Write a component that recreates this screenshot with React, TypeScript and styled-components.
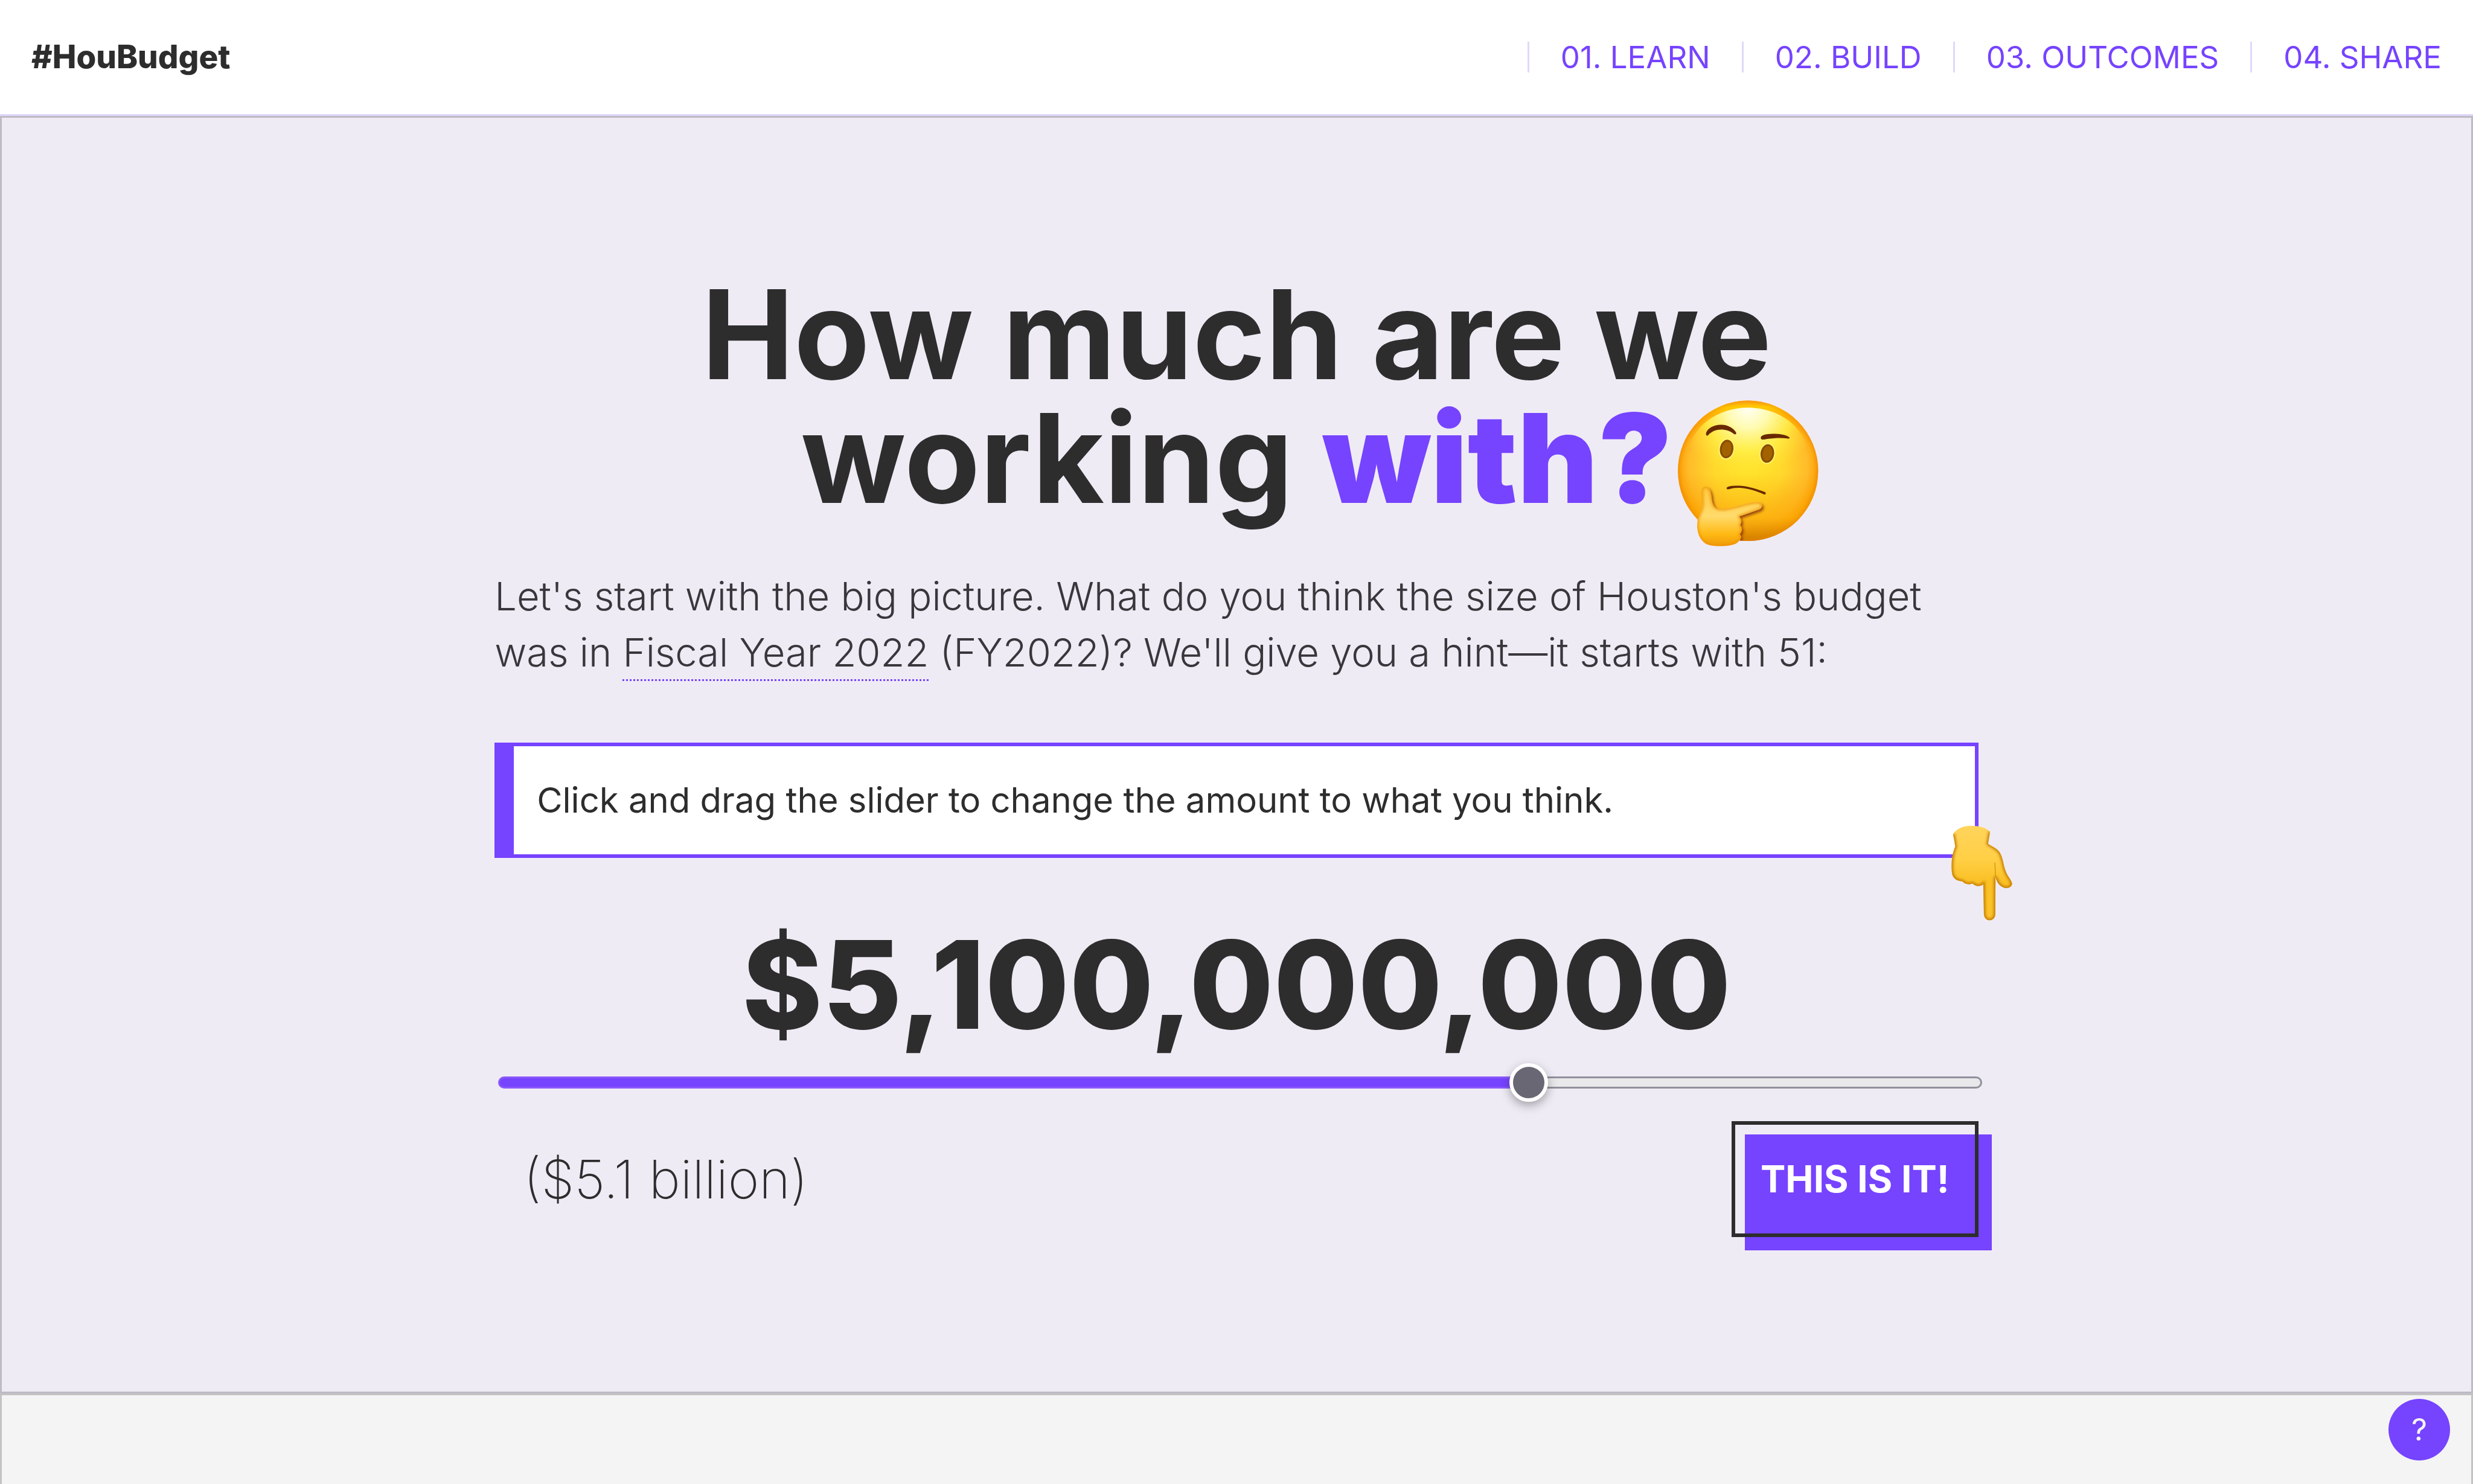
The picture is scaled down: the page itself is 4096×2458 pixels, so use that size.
import React, { useState } from "react";
import styled, { createGlobalStyle } from "styled-components";

const color = {
  purple: "#7643ff",
  ink: "#2d2d2d",
  hero: "#efebf5",
  lavender: "#e0d8f9",
};

const GlobalStyle = createGlobalStyle`
  *, *::before, *::after { box-sizing: border-box; }
  body {
    margin: 0;
    background: #f4f4f4;
    color: ${color.ink};
    font-family: Inter, "Liberation Sans", sans-serif;
  }
  h1, p { margin: 0; }
`;

const Page = styled.div`
  min-height: 100vh;
  display: flex;
  flex-direction: column;
`;

const Header = styled.header`
  display: flex;
  justify-content: space-between;
  align-items: center;
  padding: 69px 0 69px 52px;
  background: #fff;
  border-bottom: 3px solid ${color.lavender};
  font-size: 51px;
  line-height: 51px;
`;

const Brand = styled.a`
  color: ${color.ink};
  font-size: 53px;
  font-weight: 800;
  text-decoration: none;
`;

const Nav = styled.nav`
  display: flex;
`;

const NavLink = styled.a`
  padding: 0 52px;
  border-left: 3px solid ${color.lavender};
  color: ${color.purple};
  text-decoration: none;
`;

const Hero = styled.main`
  padding: 256px 0;
  background: ${color.hero};
  border: 3px solid #bebac6;
`;

const Content = styled.div`
  width: 60vw;
  margin: 0 auto;
  display: flex;
  flex-direction: column;
`;

const Title = styled.h1`
  font-size: 205px;
  line-height: 205px;
  font-weight: 700;
  text-align: center;
`;

const Accent = styled.span`
  position: relative;
  display: inline-block;
  color: ${color.purple};
  font-weight: 900;
`;

const ThinkingEmoji = styled.svg`
  position: absolute;
  left: calc(100% + 8px);
  top: 7px;
  width: 234px;
  height: 242px;
`;

const Intro = styled.p`
  margin-top: 80px;
  color: #39373b;
  font-size: 65px;
  line-height: 93px;
  font-weight: 300;
`;

const Term = styled.abbr`
  padding-bottom: 5px;
  border-bottom: 3px dotted ${color.purple};
  text-decoration: none;
`;

const Callout = styled.p`
  position: relative;
  margin-top: 103px;
  padding: 58px 38px;
  background: #fff;
  border: 6px solid ${color.purple};
  border-left-width: 32px;
  font-size: 58px;
  line-height: 63px;
  font-weight: 400;
`;

const PointerEmoji = styled.svg`
  position: absolute;
  right: -64px;
  bottom: -112px;
  width: 104px;
  height: 160px;
`;

const Amount = styled.output`
  display: block;
  margin-top: 107px;
  font-size: 202px;
  line-height: 205px;
  font-weight: 800;
  text-align: center;
`;

const Slider = styled.input<{ $fill: number }>`
  appearance: none;
  width: 100%;
  height: 64px;
  margin: 28px 0 0;
  transform: translateX(6px);
  background: none;
  cursor: pointer;

  &::-webkit-slider-runnable-track {
    height: 20px;
    border: 3px solid transparent;
    border-radius: 10px;
    background:
      linear-gradient(to right, ${color.purple} ${(p) => p.$fill}%, #e8e8ea ${(p) => p.$fill}%) padding-box,
      linear-gradient(to right, #8958fa ${(p) => p.$fill}%, #918f9c ${(p) => p.$fill}%) border-box;
  }

  &::-webkit-slider-thumb {
    appearance: none;
    width: 64px;
    height: 64px;
    margin-top: -25px;
    border: 6px solid #fff;
    border-radius: 50%;
    background: #686773;
    box-shadow: 0 6px 16px rgba(45, 45, 45, 0.4);
  }
`;

const Actions = styled.div`
  display: flex;
  justify-content: space-between;
  align-items: center;
  margin-top: 32px;
`;

const Approximation = styled.p`
  padding-left: 48px;
  font-size: 88px;
  font-weight: 200;
`;

const SubmitButton = styled.button`
  position: relative;
  z-index: 0;
  padding: 64px 48px;
  border: 0;
  background: none;
  color: #fff;
  font: 700 62px/64px Inter, "Liberation Sans", sans-serif;
  cursor: pointer;

  &::before {
    content: "";
    position: absolute;
    z-index: -1;
    inset: 22px -22px -22px 22px;
    background: ${color.purple};
  }

  &::after {
    content: "";
    position: absolute;
    inset: 0;
    border: 6px solid ${color.ink};
  }
`;

const NextSection = styled.section`
  flex: 1;
  border: 3px solid #c3c3c3;
  border-bottom: 0;
  background: #f4f4f4;
`;

const HelpButton = styled.button`
  position: fixed;
  right: 38px;
  bottom: 39px;
  width: 102px;
  height: 102px;
  padding: 0;
  border: 0;
  border-radius: 50%;
  background: ${color.purple};
  color: #f4f4f4;
  font: 400 51px/102px Inter, "Liberation Sans", sans-serif;
  cursor: pointer;
`;

const THINK_HAND =
  "M374 712 C370 672 415 672 428 712 C437 742 434 770 444 792 C455 820 475 824 510 822 C580 815 650 782 712 778 C752 776 762 812 728 826 L606 868 C622 884 624 904 612 922 C628 940 626 962 610 978 C624 994 618 1010 604 1020 C590 1046 530 1052 490 1052 C440 1052 402 1048 380 1022 C340 980 340 910 352 876 C362 848 378 822 378 790 Z";

function Thinking() {
  return (
    <ThinkingEmoji viewBox="222 146 876 908" aria-hidden="true">
      <defs>
        <radialGradient id="face" cx="661" cy="560" r="462" gradientUnits="userSpaceOnUse">
          <stop offset="0" stopColor="#ffe52a" />
          <stop offset=".45" stopColor="#ffd92c" />
          <stop offset=".8" stopColor="#ffbc2a" />
          <stop offset=".9" stopColor="#fda810" />
          <stop offset="1" stopColor="#ee8a02" />
        </radialGradient>
        <linearGradient id="rim" x1="0" y1="148" x2="0" y2="400" gradientUnits="userSpaceOnUse">
          <stop offset="0" stopColor="#ffa41c" />
          <stop offset=".16" stopColor="#ffcb00" />
          <stop offset=".4" stopColor="#ffb000" stopOpacity=".7" />
          <stop offset="1" stopColor="#ff9a00" stopOpacity="0" />
        </linearGradient>
        <linearGradient id="base" x1="0" y1="600" x2="0" y2="1020" gradientUnits="userSpaceOnUse">
          <stop offset="0" stopColor="#f9a000" stopOpacity="0" />
          <stop offset=".65" stopColor="#fba900" stopOpacity=".6" />
          <stop offset="1" stopColor="#cf7c00" />
        </linearGradient>
        <radialGradient id="shine" cx="661" cy="190" r="440" gradientUnits="userSpaceOnUse">
          <stop offset="0" stopColor="#fffff6" />
          <stop offset=".3" stopColor="#fffbb0" />
          <stop offset=".62" stopColor="#fff04a" stopOpacity=".85" />
          <stop offset="1" stopColor="#ffdf30" stopOpacity="0" />
        </radialGradient>
        <linearGradient id="palm" x1="0" y1="680" x2="0" y2="1052" gradientUnits="userSpaceOnUse">
          <stop offset="0" stopColor="#ffc93c" />
          <stop offset=".5" stopColor="#ffdb6c" />
          <stop offset=".8" stopColor="#ffb914" />
          <stop offset="1" stopColor="#ef9a08" />
        </linearGradient>
        <filter id="soft" x="-20%" y="-20%" width="140%" height="140%">
          <feGaussianBlur stdDeviation="7" />
        </filter>
        <clipPath id="disc">
          <circle cx="661" cy="584" r="436" />
        </clipPath>
        <clipPath id="handShape">
          <path d={THINK_HAND} />
        </clipPath>
      </defs>
      <circle cx="661" cy="584" r="436" fill="url(#face)" />
      <circle cx="661" cy="584" r="436" fill="url(#base)" />
      <circle cx="661" cy="584" r="436" fill="url(#rim)" />
      <path d="M275 520 C290 320 460 192 661 192 C862 192 1032 320 1047 520 C1040 640 900 660 661 660 C420 660 282 640 275 520 Z" fill="url(#shine)" />
      <g clipPath="url(#disc)">
        <circle cx="661" cy="584" r="432" fill="none" stroke="#f08a08" strokeWidth="14" opacity=".6" filter="url(#soft)" />
        <path d={THINK_HAND} fill="#843310" opacity=".85" transform="translate(10 12)" filter="url(#soft)" />
      </g>
      <g stroke="#fff36a" strokeWidth="8" fill="#8a4c00">
        <ellipse cx="528" cy="449" rx="46" ry="62" transform="rotate(8 528 449)" />
        <ellipse cx="781" cy="477" rx="46" ry="62" transform="rotate(8 781 477)" />
      </g>
      <g fill="#a36200">
        <ellipse cx="528" cy="449" rx="30" ry="46" transform="rotate(8 528 449)" />
        <ellipse cx="781" cy="477" rx="30" ry="46" transform="rotate(8 781 477)" />
      </g>
      <g fill="#692900">
        <path d="M400 350 C410 318 450 298 492 298 C540 298 575 322 588 350 C588 358 580 360 573 355 C550 336 524 328 492 328 C456 330 434 340 412 364 C404 370 398 362 400 350 Z" />
        <path d="M741 374 C746 358 790 354 830 354 C870 355 905 364 919 377 C921 384 914 385 906 383 C880 380 850 380 820 382 C790 384 770 388 752 390 C742 390 738 382 741 374 Z" />
        <path d="M528 690 C536 676 580 676 610 677 C665 680 715 698 768 717 C776 725 768 734 758 730 C712 708 660 693 610 690 C580 688 556 694 538 699 C530 700 527 696 528 690 Z" />
      </g>
      <path d={THINK_HAND} fill="url(#palm)" />
      <g clipPath="url(#handShape)">
        <path d={THINK_HAND} fill="none" stroke="#f09208" strokeWidth="14" filter="url(#soft)" />
      </g>
    </ThinkingEmoji>
  );
}

const DOWN_HAND =
  "M190 142 C216 106 256 91 306 91 C356 92 398 104 420 128 C417 154 412 178 408 202 C440 224 470 234 484 262 C502 296 504 340 518 374 C530 408 552 424 558 452 C552 474 530 482 508 476 C478 468 462 440 454 408 L453 640 C450 690 386 692 382 640 L378 454 C364 468 334 472 312 450 C292 458 264 456 248 436 C222 434 196 424 186 396 C176 352 180 270 204 220 C200 194 196 168 190 142 Z";

function PointingDown() {
  return (
    <PointerEmoji viewBox="176 88 390 600" aria-hidden="true">
      <defs>
        <linearGradient id="wrist" x1="0" y1="90" x2="0" y2="680" gradientUnits="userSpaceOnUse">
          <stop offset="0" stopColor="#ffd45c" />
          <stop offset=".35" stopColor="#ffcf45" />
          <stop offset=".6" stopColor="#fac024" />
          <stop offset="1" stopColor="#fcc42c" />
        </linearGradient>
        <filter id="edge" x="-20%" y="-20%" width="140%" height="140%">
          <feGaussianBlur stdDeviation="8" />
        </filter>
        <clipPath id="downShape">
          <path d={DOWN_HAND} />
        </clipPath>
      </defs>
      <path d={DOWN_HAND} fill="url(#wrist)" />
      <g clipPath="url(#downShape)" fill="none" stroke="#c47a04">
        <path
          d="M190 142 C196 168 200 194 204 220 C180 270 176 352 186 396 C196 424 222 434 248 436 C264 456 292 458 312 450 C334 472 364 468 378 454 L382 640 C386 692 450 690 453 640 L454 408 C462 440 478 468 508 476 C530 482 552 474 558 452 C552 424 530 408 518 374 C504 340 502 296 484 262 C470 234 440 224 408 202 C412 178 417 154 420 128"
          strokeWidth="20"
          filter="url(#edge)"
        />
        <path d="M454 410 L450 320" strokeWidth="5" opacity=".7" />
      </g>
    </PointerEmoji>
  );
}

const MIN = 3000;
const MAX = 6000;

const steps = [
  { id: "learn", label: "01. LEARN" },
  { id: "build", label: "02. BUILD" },
  { id: "outcomes", label: "03. OUTCOMES" },
  { id: "share", label: "04. SHARE" },
];

export default function App() {
  const [millions, setMillions] = useState(5100);
  const fill = ((millions - MIN) / (MAX - MIN)) * 100;

  return (
    <>
      <GlobalStyle />
      <Page>
        <Header>
          <Brand href="#top">#HouBudget</Brand>
          <Nav>
            {steps.map((s) => (
              <NavLink key={s.id} href={`#${s.id}`}>
                {s.label}
              </NavLink>
            ))}
          </Nav>
        </Header>
        <Hero>
          <Content>
            <Title>
              How much are we
              <br />
              working{" "}
              <Accent>
                with?
                <Thinking />
              </Accent>
            </Title>
            <Intro>
              Let's start with the big picture. What do you think the size of Houston's budget was in{" "}
              <Term>Fiscal Year 2022</Term> (FY2022)? We'll give you a hint—it starts with 51:
            </Intro>
            <Callout id="slider-hint">
              Click and drag the slider to change the amount to what you think.
              <PointingDown />
            </Callout>
            <Amount htmlFor="amount">${(millions * 1000000).toLocaleString("en-US")}</Amount>
            <Slider
              id="amount"
              type="range"
              aria-labelledby="slider-hint"
              min={MIN}
              max={MAX}
              step={100}
              value={millions}
              $fill={fill}
              onChange={(e) => setMillions(Number(e.target.value))}
            />
            <Actions>
              <Approximation>(${(millions / 1000).toFixed(1)} billion)</Approximation>
              <SubmitButton type="button">THIS IS IT!</SubmitButton>
            </Actions>
          </Content>
        </Hero>
        <NextSection />
      </Page>
      <HelpButton type="button">?</HelpButton>
    </>
  );
}
